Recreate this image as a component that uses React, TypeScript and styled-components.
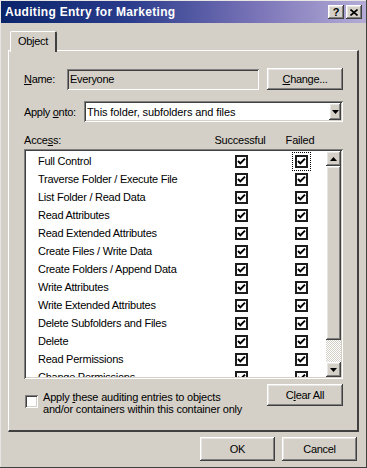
import React from 'react'
import styled, { createGlobalStyle, css } from 'styled-components'

const GlobalStyle = createGlobalStyle`
  html, body {
    margin: 0;
    padding: 0;
    background: #d4d0c8;
  }
  * {
    box-sizing: border-box;
  }
`

const raised = css`
  background-color: #d4d0c8;
  box-shadow: inset -1px -1px #404040, inset 1px 1px #ffffff, inset -2px -2px #808080, inset 2px 2px #e8e6e2;
`

const sunken = css`
  box-shadow: inset 1px 1px #808080, inset -1px -1px #ffffff, inset 2px 2px #404040, inset -2px -2px #d4d0c8;
`

const Window = styled.div`
  width: 367px;
  height: 468px;
  background: #d4d0c8;
  font-family: 'Liberation Sans', Arial, sans-serif;
  font-size: 11px;
  letter-spacing: -0.3px;
  white-space: nowrap;
  color: #000;
  display: flex;
  flex-direction: column;
  overflow: hidden;
  box-shadow: inset -1px -1px #404040, inset 1px 1px #e8e6e2;
`

const TitleBar = styled.div`
  height: 22px;
  margin: 1px 1px 0 1px;
  padding: 0 4px;
  display: flex;
  align-items: center;
  background: linear-gradient(90deg, #0a246a 0%, #2a3c8c 35%, #7a74b8 70%, #b4acd6 100%);
`

const Title = styled.div`
  flex: 1;
  color: #fff;
  font-weight: bold;
  font-size: 12px;
  letter-spacing: 0.3px;
`

const CaptionButton = styled.div`
  ${raised};
  width: 16px;
  height: 14px;
  margin-left: 2px;
  display: flex;
  align-items: center;
  justify-content: center;
  font-weight: bold;
  font-size: 11px;
  letter-spacing: 0;
`

const TabStrip = styled.div`
  display: flex;
  padding: 8px 0 0 10px;
  height: 29px;
`

const Tab = styled.div`
  height: 21px;
  padding: 3px 7px 0 7px;
  position: relative;
  z-index: 1;
  background: #d4d0c8;
  border-left: 1px solid #ffffff;
  border-top: 1px solid #ffffff;
  border-right: 2px solid #404040;
  border-top-left-radius: 2px;
  border-top-right-radius: 2px;
`

const Panel = styled.div`
  margin: -2px 8px 0 8px;
  height: 382px;
  border-top: 1px solid #ffffff;
  border-left: 1px solid #ffffff;
  border-right: 2px solid #404040;
  border-bottom: 2px solid #404040;
  padding: 17px 14px 0 15px;
  display: flex;
  flex-direction: column;
`

const FieldRow = styled.div<{ $mt?: number }>`
  display: flex;
  align-items: center;
  margin-top: ${({ $mt }) => $mt ?? 0}px;
`

const Label = styled.div<{ $w: number }>`
  width: ${({ $w }) => $w}px;
  flex-shrink: 0;
`

const Key = styled.span`
  text-decoration: underline;
`

const TextField = styled.div<{ $white?: boolean }>`
  ${sunken};
  height: 21px;
  flex: 1;
  display: flex;
  align-items: center;
  padding-left: 3px;
  background: ${({ $white }) => ($white ? '#ffffff' : '#d4d0c8')};
`

const Button = styled.div<{ $w: number; $h?: number }>`
  ${raised};
  width: ${({ $w }) => $w}px;
  height: ${({ $h }) => $h ?? 22}px;
  flex-shrink: 0;
  display: flex;
  align-items: center;
  justify-content: center;
`

const SelectBox = styled(TextField)`
  justify-content: space-between;
  padding-right: 2px;
  letter-spacing: -0.1px;
`

const SmallArrowButton = styled.div`
  ${raised};
  width: 12px;
  height: 17px;
  display: flex;
  align-items: center;
  justify-content: center;
`

const HeaderRow = styled.div`
  display: grid;
  grid-template-columns: 1fr 60px 60px;
  padding-right: 13px;
  margin-top: 11px;
  height: 14px;
  align-items: center;
  letter-spacing: -0.2px;
`

const HeaderCell = styled.div`
  text-align: center;
`

const ListBox = styled.div`
  ${sunken};
  margin-top: 2px;
  height: 230px;
  background: #ffffff;
  padding: 2px;
  display: flex;
  overflow: hidden;
`

const ListRows = styled.div`
  flex: 1;
  padding-top: 1px;
  overflow: hidden;
`

const Row = styled.div`
  display: grid;
  grid-template-columns: 1fr 13px 13px;
  column-gap: 47px;
  padding: 0 18px 0 12px;
  height: 18px;
  align-items: center;
  letter-spacing: -0.25px;
`

const Box = styled.div<{ $focus?: boolean }>`
  width: 13px;
  height: 13px;
  background: #ffffff;
  border: 2px solid #1c1c1c;
  display: flex;
  align-items: center;
  justify-content: center;
  outline: ${({ $focus }) => ($focus ? '1px dotted #000' : 'none')};
  outline-offset: 2px;
`

const ScrollBar = styled.div`
  width: 15px;
  display: flex;
  flex-direction: column;
  background: repeating-conic-gradient(#d4d0c8 0 25%, #ffffff 0 50%) 0 0 / 2px 2px;
`

const ScrollButton = styled.div`
  ${raised};
  height: 15px;
  display: flex;
  align-items: center;
  justify-content: center;
`

const Thumb = styled.div`
  ${raised};
  height: 174px;
`

const BottomRow = styled.div`
  display: flex;
  justify-content: space-between;
  align-items: flex-start;
  margin-top: 5px;
`

const CheckOption = styled.div`
  display: flex;
  align-items: flex-start;
  padding-top: 11px;
  padding-left: 1px;
`

const PlainBox = styled.div`
  ${sunken};
  width: 13px;
  height: 13px;
  background: #ffffff;
  margin-right: 5px;
  flex-shrink: 0;
`

const OptionText = styled.div`
  line-height: 12px;
  margin-top: -4px;
  letter-spacing: -0.2px;
`

const Footer = styled.div`
  display: flex;
  justify-content: flex-end;
  gap: 7px;
  padding: 5px 10px 0 0;
`

const Check = () => (
  <svg width="9" height="9" viewBox="0 0 9 9">
    <path d="M1 4 L3.3 6.4 L8 1.6" fill="none" stroke="#000" strokeWidth="2" />
  </svg>
)

const Arrow = ({ down }: { down?: boolean }) => (
  <svg width="7" height="4" viewBox="0 0 7 4">
    <path d={down ? 'M0 0 H7 L3.5 4 Z' : 'M0 4 H7 L3.5 0 Z'} fill="#000" />
  </svg>
)

const entries = [
  'Full Control',
  'Traverse Folder / Execute File',
  'List Folder / Read Data',
  'Read Attributes',
  'Read Extended Attributes',
  'Create Files / Write Data',
  'Create Folders / Append Data',
  'Write Attributes',
  'Write Extended Attributes',
  'Delete Subfolders and Files',
  'Delete',
  'Read Permissions',
  'Change Permissions',
]

export default function App() {
  return (
    <>
      <GlobalStyle />
      <Window>
        <TitleBar>
          <Title>Auditing Entry for Marketing</Title>
          <CaptionButton>?</CaptionButton>
          <CaptionButton>
            <svg width="8" height="7" viewBox="0 0 8 7">
              <path d="M0.5 0.5 L7.5 6.5 M7.5 0.5 L0.5 6.5" stroke="#000" strokeWidth="1.6" />
            </svg>
          </CaptionButton>
        </TitleBar>

        <TabStrip>
          <Tab>Object</Tab>
        </TabStrip>

        <Panel>
          <FieldRow>
            <Label $w={43}>
              <Key>N</Key>ame:
            </Label>
            <TextField>Everyone</TextField>
            <div style={{ width: 8 }} />
            <Button $w={76}>
              <Key>C</Key>hange...
            </Button>
          </FieldRow>

          <FieldRow $mt={11}>
            <Label $w={60}>
              Apply <Key>o</Key>nto:
            </Label>
            <SelectBox $white>
              This folder, subfolders and files
              <SmallArrowButton>
                <Arrow down />
              </SmallArrowButton>
            </SelectBox>
          </FieldRow>

          <HeaderRow>
            <div>
              Acce<Key>s</Key>s:
            </div>
            <HeaderCell>Successful</HeaderCell>
            <HeaderCell>Failed</HeaderCell>
          </HeaderRow>

          <ListBox>
            <ListRows>
              {entries.map((name, i) => (
                <Row key={name}>
                  <span>{name}</span>
                  <Box>
                    <Check />
                  </Box>
                  <Box $focus={i === 0}>
                    <Check />
                  </Box>
                </Row>
              ))}
            </ListRows>
            <ScrollBar>
              <ScrollButton>
                <Arrow />
              </ScrollButton>
              <Thumb />
              <div style={{ flex: 1 }} />
              <ScrollButton>
                <Arrow down />
              </ScrollButton>
            </ScrollBar>
          </ListBox>

          <BottomRow>
            <CheckOption>
              <PlainBox />
              <OptionText>
                Apply <Key>t</Key>hese auditing entries to objects
                <br />
                and/or containers within this container only
              </OptionText>
            </CheckOption>
            <Button $w={76}>
              C<Key>l</Key>ear All
            </Button>
          </BottomRow>
        </Panel>

        <Footer>
          <Button $w={75} $h={24}>
            OK
          </Button>
          <Button $w={75} $h={24}>
            Cancel
          </Button>
        </Footer>
      </Window>
    </>
  )
}
